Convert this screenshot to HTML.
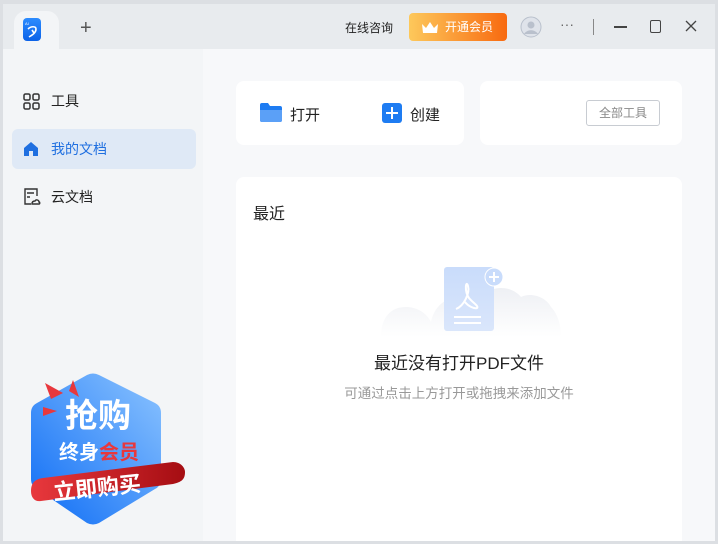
<!DOCTYPE html>
<html><head><meta charset="utf-8"><style>
*{margin:0;padding:0;box-sizing:border-box}
body{width:718px;height:544px;overflow:hidden;background:#dcdfe3;font-family:"Liberation Sans","Noto Sans CJK SC",sans-serif;position:relative}
.win{position:absolute;left:3px;top:4px;width:712px;height:537px;background:#f7f8fa;overflow:hidden}
.title{position:absolute;left:0;top:0;width:712px;height:45px;background:#e8ebee}
.tab{position:absolute;left:11px;top:7px;width:45px;height:38px;background:#f3f5f7;border-radius:12px 12px 0 0}
.logo{position:absolute;left:20px;top:14px;width:18px;height:23px;border-radius:4px;background:linear-gradient(#2d8cff,#0b62e8)}
.side{position:absolute;left:0;top:45px;width:200px;height:492px;background:#f3f5f7}
.item{position:absolute;left:9px;width:184px;height:40px;font-size:14px;color:#222;line-height:40px;padding-left:39px;border-radius:6px}
.card{position:absolute;background:#fff;border-radius:8px}
</style></head><body>
<div class="win">
<div class="title">
 <div class="tab"></div>
 <div class="logo"><svg width="18" height="23"><text x="2" y="7" font-size="4" fill="#fff">AI</text><path d="M5 11c3-3 8-3 8 0 0 4-4 6-7 8M9 12l2 3" stroke="#fff" stroke-width="1.6" fill="none"/></svg></div>
 <div style="position:absolute;left:77px;top:14px;font-size:20px;color:#555;line-height:20px">+</div>
 <div style="position:absolute;left:342px;top:15px;font-size:12px;color:#222">在线咨询</div>
 <div style="position:absolute;left:406px;top:9px;width:98px;height:28px;border-radius:4px;background:linear-gradient(90deg,#fdc85b,#f86a10);color:#fff;font-size:12px;line-height:28px;padding-left:36px">开通会员
  <svg style="position:absolute;left:12px;top:8px" width="18" height="13"><path d="M1 3l4 4 4-6 4 6 4-4-1 9H2z" fill="#fff"/></svg></div>
 <svg style="position:absolute;left:517px;top:12px" width="22" height="22"><circle cx="11" cy="11" r="10" fill="#dfe3ea" stroke="#b9c0cc"/><circle cx="11" cy="9" r="3.5" fill="#b9c0cc"/><path d="M4 18c3-5 11-5 14 0" fill="#b9c0cc"/></svg>
 <div style="position:absolute;left:557px;top:12px;font-size:14px;color:#666">···</div>
 <div style="position:absolute;left:590px;top:15px;width:1px;height:16px;background:#888"></div>
 <div style="position:absolute;left:611px;top:22px;width:13px;height:1.5px;background:#444"></div>
 <div style="position:absolute;left:647px;top:16px;width:11px;height:13px;border:1.5px solid #444;border-radius:2px"></div>
 <svg style="position:absolute;left:682px;top:16px" width="12" height="12"><path d="M1 1l10 10M11 1L1 11" stroke="#444" stroke-width="1.3"/></svg>
</div>
<div class="side">
 <div class="item" style="top:32px"><svg style="position:absolute;left:11px;top:12px" width="17" height="17" fill="none" stroke="#333" stroke-width="1.5"><rect x="1" y="1" width="6" height="6" rx="1.5"/><rect x="10" y="1" width="6" height="6" rx="1.5"/><rect x="1" y="10" width="6" height="6" rx="1.5"/><rect x="10" y="10" width="6" height="6" rx="1.5"/></svg>工具</div>
 <div class="item" style="top:80px;background:#dfe9f6;color:#1f6fe0"><svg style="position:absolute;left:11px;top:12px" width="16" height="16"><path d="M1 7l7-6 7 6v8H10v-5H6v5H1z" fill="#1f6fe0"/></svg>我的文档</div>
 <div class="item" style="top:128px"><svg style="position:absolute;left:11px;top:11px" width="18" height="18" fill="none" stroke="#333" stroke-width="1.4"><path d="M8 16H2V1h12v7M4 5h7M4 9h3"/><path d="M9 16c0-2 1-3 3-3 1-2 4-1 4 1 1 0 1 2 0 2z"/></svg>云文档</div>
 <svg style="position:absolute;left:20px;top:318px" width="170" height="160">
  <defs><linearGradient id="g" x1="0" y1="1" x2="1" y2="0"><stop offset="0" stop-color="#0d6cf5"/><stop offset="1" stop-color="#8cc4ff"/></linearGradient>
  <linearGradient id="r" x1="0" x2="1"><stop offset="0" stop-color="#e8383d"/><stop offset="1" stop-color="#a50d12"/></linearGradient></defs>
  <path d="M64 8q6-3 12 0l56 28q6 3 6 10v66q0 7-6 10l-56 34q-6 3-12 0l-50-34q-6-3-6-10V46q0-7 6-10z" fill="url(#g)"/>
  <path d="M22 16l18 10-12 6zM50 13l6 17-10-6zM20 40l14 4-14 5z" fill="#e8383d"/>
  <text x="42" y="60" font-size="33" font-weight="bold" fill="#fff">抢购</text>
  <text x="36" y="92" font-size="20" font-weight="bold" fill="#fff">终身<tspan fill="#e8383d">会员</tspan></text>
  <path d="M8 124c0-8 4-12 12-13l130-16c8 0 12 6 12 10 0 8-4 10-12 12L18 134c-6 1-10-3-10-10z" fill="url(#r)"/>
  <text x="30" y="128" font-size="22" font-weight="bold" fill="#fff" transform="rotate(-6 80 120)">立即购买</text>
 </svg>
</div>
<div class="card" style="left:233px;top:77px;width:228px;height:64px">
 <svg style="position:absolute;left:24px;top:22px" width="22" height="19"><path d="M0 2a2 2 0 012-2h6l2 3h10a2 2 0 012 2v12a2 2 0 01-2 2H2a2 2 0 01-2-2z" fill="#1e7cf2"/><path d="M0 7h22v10a2 2 0 01-2 2H2a2 2 0 01-2-2z" fill="#5ba0f7"/></svg>
 <div style="position:absolute;left:54px;top:23px;font-size:15px;color:#222">打开</div>
 <div style="position:absolute;left:146px;top:22px;width:20px;height:20px;background:#1e7cf2;border-radius:3px"><svg width="20" height="20"><path d="M10 4v12M4 10h12" stroke="#fff" stroke-width="2"/></svg></div>
 <div style="position:absolute;left:174px;top:23px;font-size:15px;color:#222">创建</div>
</div>
<div class="card" style="left:477px;top:77px;width:202px;height:64px">
 <div style="position:absolute;left:106px;top:19px;width:74px;height:26px;border:1px solid #c8ccd2;border-radius:3px;font-size:12px;color:#888;text-align:center;line-height:24px">全部工具</div>
</div>
<div class="card" style="left:233px;top:173px;width:446px;height:380px">
 <div style="position:absolute;left:17px;top:23px;font-size:16px;color:#222">最近</div>
 <svg style="position:absolute;left:140px;top:80px" width="195" height="80">
  <defs><linearGradient id="c" x1="0" y1="0" x2="0" y2="1"><stop offset="0" stop-color="#eef0f4"/><stop offset="1" stop-color="#fff"/></linearGradient>
  <linearGradient id="d" x1="0" y1="0" x2="0" y2="1"><stop offset="0" stop-color="#c9dcfb"/><stop offset="1" stop-color="#dae6fb"/></linearGradient></defs>
  <path d="M5 80c0-20 10-30 25-30 10 0 20 5 25 15 5-25 30-30 50-25 10-12 30-12 40 0 10-5 25 0 30 10 5 5 10 15 10 30z" fill="url(#c)"/>
  <rect x="68" y="10" width="50" height="64" rx="3" fill="url(#d)"/>
  <circle cx="118" cy="20" r="9" fill="#c9dcfb" stroke="#fff" stroke-width="1"/>
  <path d="M118 15v10M113 20h10" stroke="#fff" stroke-width="2"/>
  <path d="M80 52c8-3 14-16 12-23s-4 5 1 12c4 5 10 8 8 10-3 1-9-2-12-6" stroke="#fff" stroke-width="2" fill="none"/>
  <path d="M78 60h27M78 66h27" stroke="#fff" stroke-width="2"/>
 </svg>
 <div style="position:absolute;left:0;width:446px;top:172px;text-align:center;font-size:17px;color:#222">最近没有打开PDF文件</div>
 <div style="position:absolute;left:0;width:446px;top:205px;text-align:center;font-size:13.5px;color:#999">可通过点击上方打开或拖拽来添加文件</div>
</div>
</div>
</body></html>
